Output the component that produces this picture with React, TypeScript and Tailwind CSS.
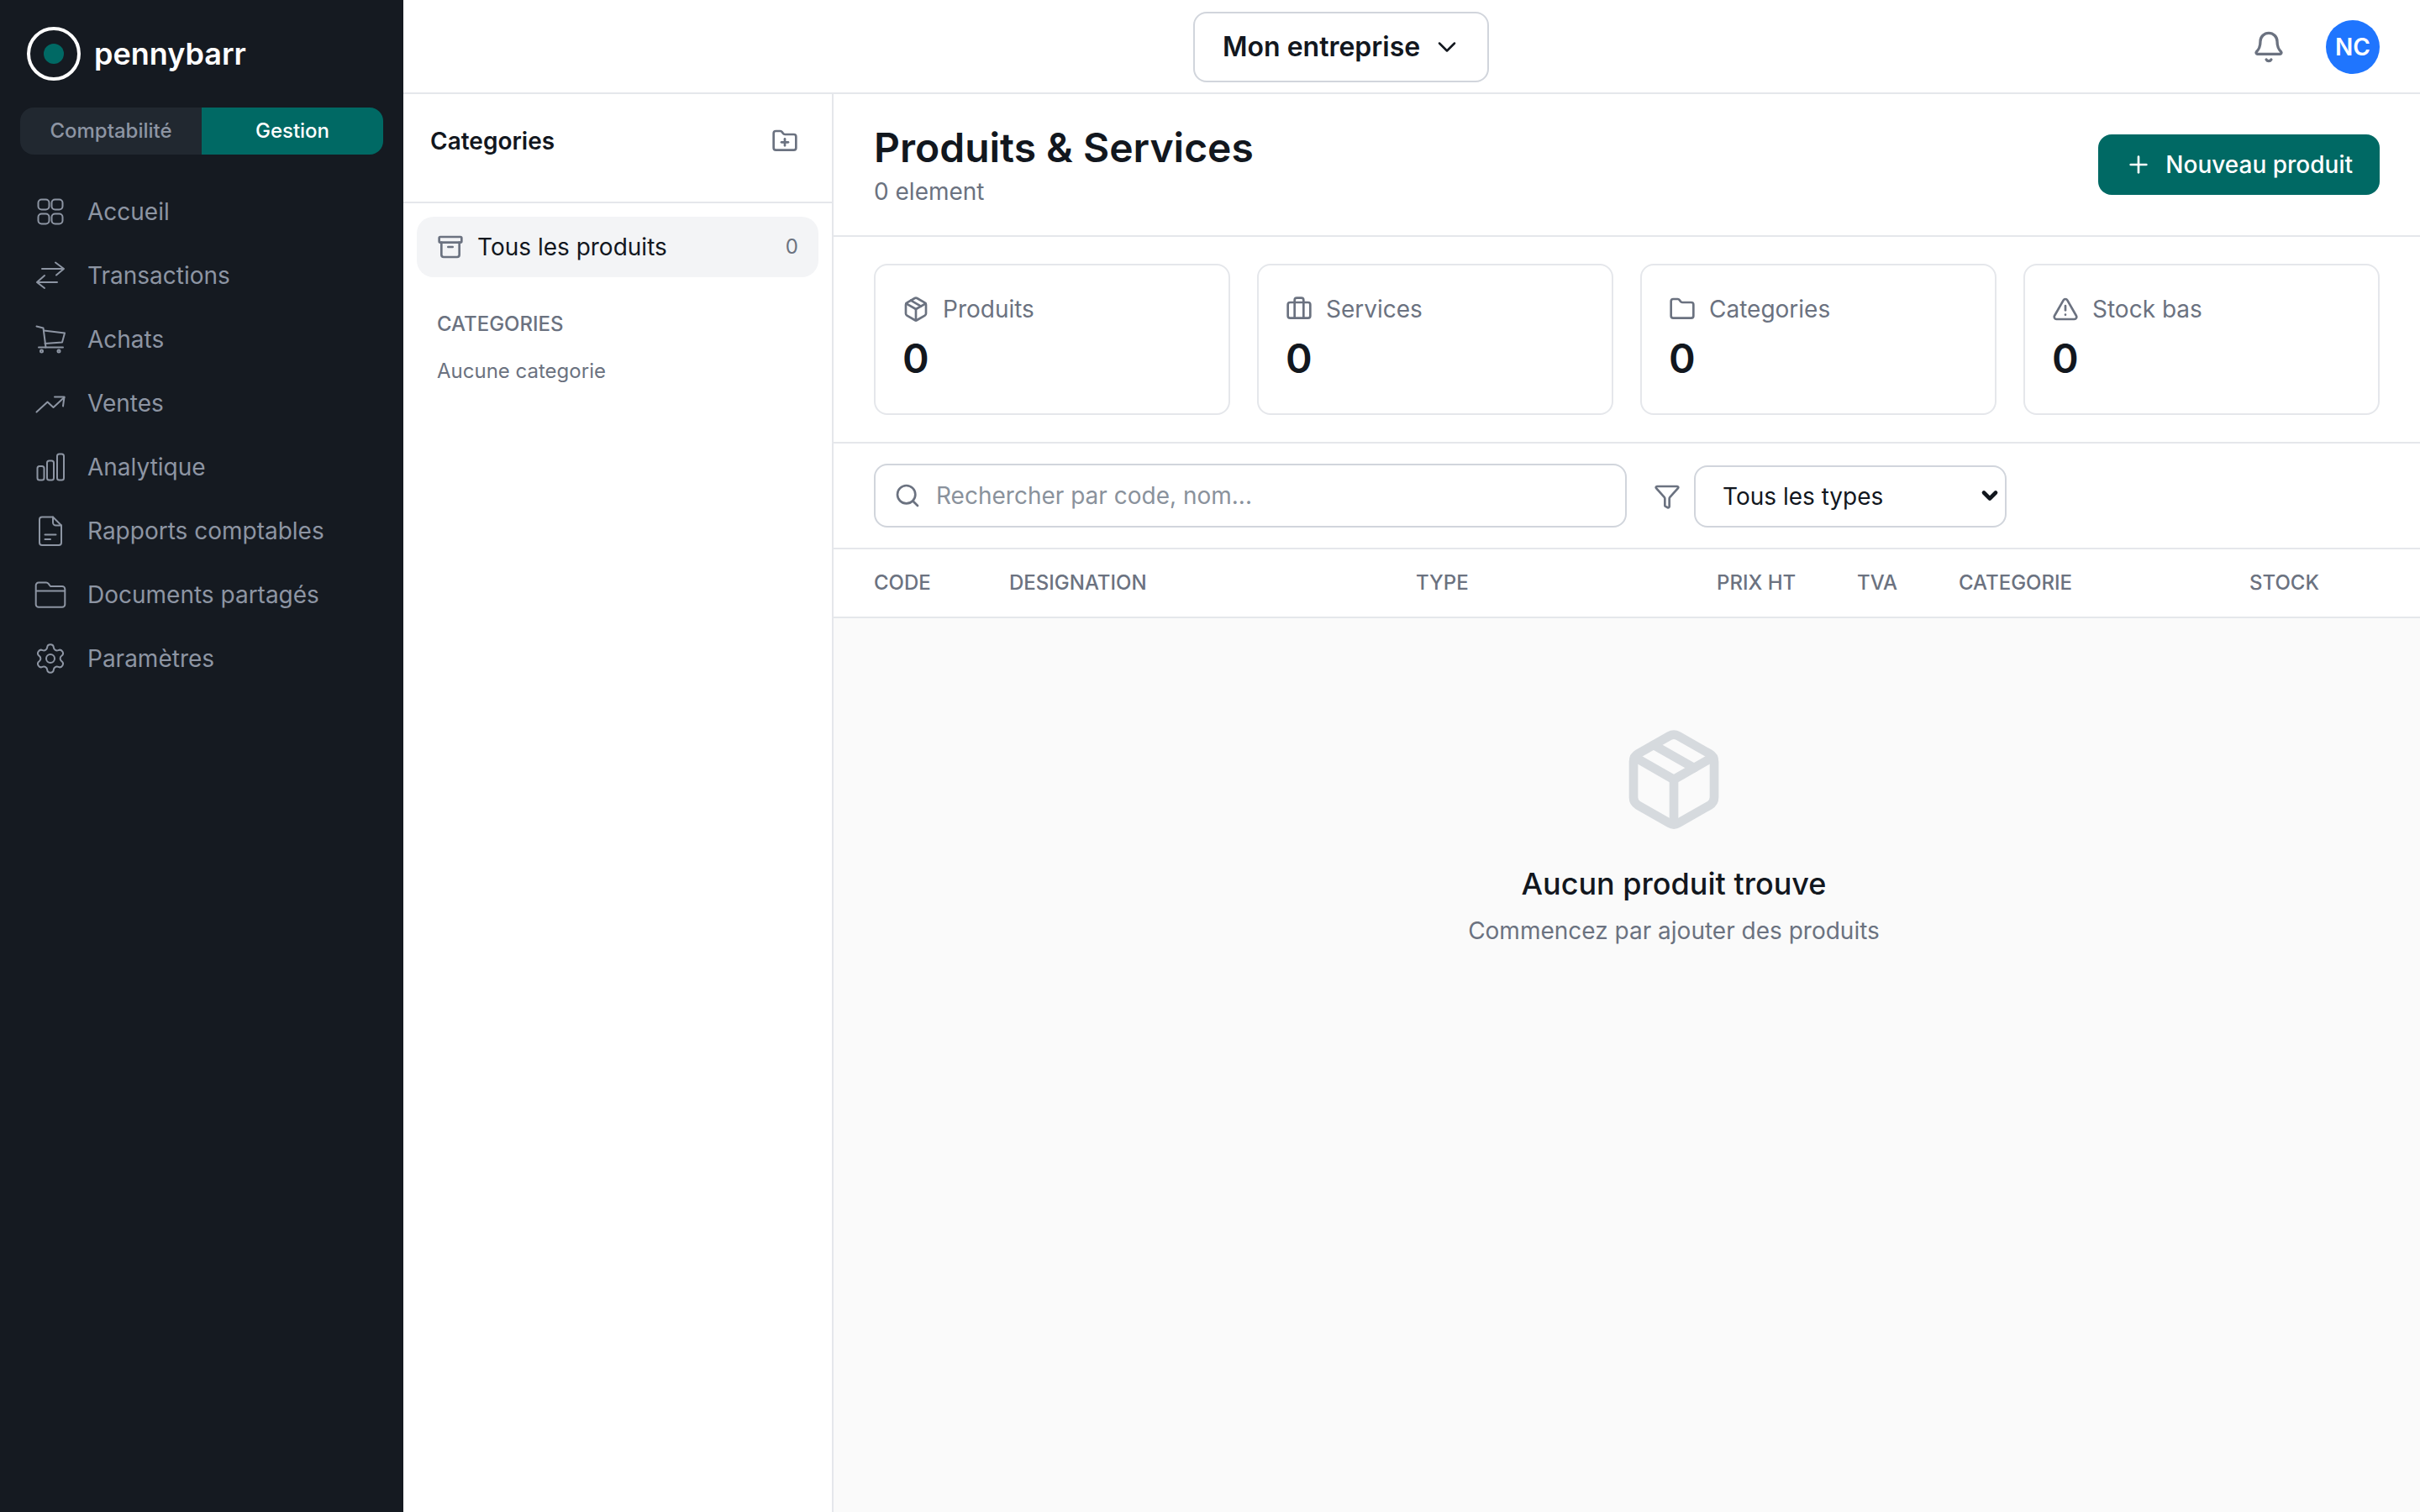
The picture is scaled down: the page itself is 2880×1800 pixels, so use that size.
import { Archive, Bell, Briefcase, ChevronDown, Filter, Folder, FolderPlus, Package, Plus, Search, Settings, TriangleAlert } from "lucide-react";
import type { ReactNode } from "react";

function NavSvg({ children }: { children: ReactNode }) {
  return (
    <svg viewBox="0 0 40 40" fill="none" stroke="currentColor" strokeWidth={2} strokeLinecap="round" strokeLinejoin="round" className="h-10 w-10 shrink-0">
      {children}
    </svg>
  );
}

const navItems: { label: string; icon: ReactNode }[] = [
  {
    label: "Accueil",
    icon: (
      <NavSvg>
        <rect x="5.5" y="5.5" width="13" height="12" rx="4" />
        <rect x="21.5" y="5.5" width="13" height="12" rx="4" />
        <rect x="5.5" y="22.5" width="13" height="12" rx="4" />
        <rect x="21.5" y="22.5" width="13" height="12" rx="4" />
      </NavSvg>
    ),
  },
  {
    label: "Transactions",
    icon: (
      <NavSvg>
        <path d="M10 12h26M26 4.500 36 12l-9 7.500" />
        <path d="M28 28H4M13 20l-9 8 9 7" />
      </NavSvg>
    ),
  },
  {
    label: "Achats",
    icon: (
      <NavSvg>
        <path d="M3.500 4.500 11.500 6.500 14.500 29.500" />
        <path d="M12 9.500 37 12.500 34 23.500 13.500 25" />
        <path d="M6 29.500H35" />
        <circle cx="9.500" cy="34" r="1.500" />
        <circle cx="30" cy="34" r="1.500" />
      </NavSvg>
    ),
  },
  {
    label: "Ventes",
    icon: (
      <NavSvg>
        <path d="M3.500 30.500 16.500 18.500 23.500 25 36.500 13" />
        <path d="M25 12.500H36.500L35 23.500" />
      </NavSvg>
    ),
  },
  {
    label: "Analytique",
    icon: (
      <NavSvg>
        <rect x="4.500" y="19" width="8" height="16.500" rx="2.500" />
        <rect x="16" y="12.500" width="8" height="23" rx="2.500" />
        <rect x="28" y="4.500" width="8" height="31" rx="2.500" />
      </NavSvg>
    ),
  },
  {
    label: "Rapports comptables",
    icon: (
      <NavSvg>
        <path d="M10 3.500h13L33 13.500V34a3 3 0 0 1-3 3H10a3 3 0 0 1-3-3V6.500a3 3 0 0 1 3-3z" />
        <path d="M23 3.500V10a3.500 3.500 0 0 0 3.500 3.500H33" />
        <path d="M13.500 24.500H26.500M13.500 30H20" />
      </NavSvg>
    ),
  },
  {
    label: "Documents partagés",
    icon: (
      <NavSvg>
        <path d="M6 5.500h9c1 0 1.800.4 2.500 1.200l2.500 3.300h14a3.300 3.300 0 0 1 3.300 3.300V31.500a3.300 3.300 0 0 1-3.300 3.300H6a3.300 3.300 0 0 1-3.300-3.300V8.800A3.300 3.300 0 0 1 6 5.500z" />
        <path d="M3 15.500H37" />
      </NavSvg>
    ),
  },
  {
    label: "Paramètres",
    icon: <Settings className="h-10 w-10 shrink-0" strokeWidth={1.2} />,
  },
];

const stats = [
  { label: "Produits", Icon: Package },
  { label: "Services", Icon: Briefcase },
  { label: "Categories", Icon: Folder },
  { label: "Stock bas", Icon: TriangleAlert },
];

const columns = ["CODE", "DESIGNATION", "TYPE", "PRIX HT", "TVA", "CATEGORIE", "STOCK"];

function Sidebar() {
  return (
    <aside className="flex h-full w-[480px] shrink-0 flex-col bg-[#151a21]">
      <div className="flex items-center gap-4 pl-8 pt-8">
        <span className="flex h-16 w-16 items-center justify-center rounded-full border-4 border-white">
          <span className="h-6 w-6 rounded-full bg-[#006964]" />
        </span>
        <span className="text-[36px] leading-[56px] font-semibold text-white">pennybarr</span>
      </div>

      <div className="mx-6 mt-8 flex h-14 overflow-hidden rounded-2xl text-[24px] font-medium">
        <div className="flex w-1/2 items-center justify-center bg-[#212830] text-[#8d95a3]">Comptabilité</div>
        <div className="flex w-1/2 items-center justify-center bg-[#006964] text-white">Gestion</div>
      </div>

      <nav className="mt-[30px] flex flex-col px-10">
        {navItems.map(({ label, icon }) => (
          <div key={label} className="flex h-[76px] items-center gap-6 text-[28px] text-[#8d95a3]">
            {icon}
            {label}
          </div>
        ))}
      </nav>
    </aside>
  );
}

function TopBar() {
  return (
    <header className="flex h-[112px] shrink-0 items-center justify-between border-b-2 border-gray-200 bg-white pr-12 pt-[2px]">
      <div className="ml-[940px] flex h-[84px] w-[352px] items-center gap-[14px] rounded-2xl border-2 border-gray-300 pl-[33px] text-[32px] font-semibold text-[#12171e]">
        Mon entreprise
        <ChevronDown className="h-9 w-9" strokeWidth={1.7} />
      </div>
      <div className="flex items-center gap-12">
        <Bell className="h-10 w-10 text-[#6b7280]" />
        <span className="flex h-16 w-16 items-center justify-center rounded-full bg-[#1f75fe] text-[28px] font-semibold text-white">NC</span>
      </div>
    </header>
  );
}

function CategoriesPanel() {
  return (
    <div className="flex h-full w-[512px] shrink-0 flex-col border-r-2 border-gray-200 bg-white">
      <div className="flex h-[130px] shrink-0 items-center justify-between border-b-2 border-gray-200 pb-4 pl-8 pr-10">
        <span className="text-[28px] font-semibold text-[#12171e]">Categories</span>
        <FolderPlus className="h-8 w-8 text-[#6b7280]" />
      </div>
      <div className="p-4">
        <div className="flex h-[72px] items-center justify-between rounded-[20px] bg-[#f3f4f6] px-6">
          <div className="flex items-center gap-4 text-[28px] text-[#12171e]">
            <Archive className="h-8 w-8 text-[#6b7280]" />
            Tous les produits
          </div>
          <span className="text-[24px] text-[#6b7280]">0</span>
        </div>
        <div className="mt-10 px-6 text-[24px] leading-8 font-medium text-[#6b7280]">CATEGORIES</div>
        <div className="mt-6 px-6 text-[24px] leading-8 text-[#6b7280]">Aucune categorie</div>
      </div>
    </div>
  );
}

function ProductsView() {
  return (
    <div className="flex h-full min-w-0 flex-1 flex-col overflow-hidden bg-white">
      <div className="flex shrink-0 items-center justify-between border-b-2 border-gray-200 px-12 py-8">
        <div>
          <h1 className="text-[48px] leading-[64px] font-semibold text-[#12171e]">Produits &amp; Services</h1>
          <p className="text-[28px] leading-10 text-[#6b7280]">0 element</p>
        </div>
        <button className="flex h-[72px] items-center gap-4 rounded-2xl bg-[#006964] px-8 text-[28px] font-medium text-white">
          <Plus className="h-8 w-8" />
          Nouveau produit
        </button>
      </div>

      <div className="grid shrink-0 grid-cols-4 gap-8 border-b-2 border-gray-200 px-12 py-8">
        {stats.map(({ label, Icon }) => (
          <div key={label} className="h-[180px] rounded-2xl border-2 border-gray-200 p-8">
            <div className="flex items-center gap-4 text-[28px] leading-10 text-[#6b7280]">
              <Icon className="h-8 w-8" />
              {label}
            </div>
            <div className="mt-[7px] text-[48px] leading-[64px] font-semibold text-[#12171e]">0</div>
          </div>
        ))}
      </div>

      <div className="flex shrink-0 items-end gap-8 border-b-2 border-gray-200 px-12 py-6">
        <div className="relative w-[896px]">
          <Search className="absolute left-6 top-[22px] h-8 w-8 text-[#6b7280]" />
          <input
            placeholder="Rechercher par code, nom..."
            className="h-[76px] w-full rounded-2xl border-2 border-gray-300 pl-[72px] text-[28px] outline-none placeholder:text-[#8a929c]"
          />
        </div>
        <div className="flex items-center gap-4">
          <Filter className="h-8 w-8 text-[#6b7280]" />
          <div className="relative">
            <select className="h-[74px] w-[372px] appearance-none rounded-2xl border-2 border-gray-300 bg-white pl-8 text-[28px] text-[#12171e] outline-none">
              <option>Tous les types</option>
            </select>
            <ChevronDown className="pointer-events-none absolute right-[6px] top-[22px] h-7 w-7 text-[#12171e]" strokeWidth={4} />
          </div>
        </div>
      </div>

      <div className="flex min-h-0 flex-1 flex-col overflow-hidden">
        <div className="flex min-h-0 w-[2000px] flex-1 flex-col">
          <div className="grid shrink-0 grid-cols-[161px_484px_358px_167px_121px_346px_1fr] border-b-2 border-gray-200 py-6 pl-12 text-[24px] leading-8 font-medium text-[#6b7280]">
            {columns.map((c) => (
              <span key={c}>{c}</span>
            ))}
          </div>
          <div className="flex flex-1 flex-col items-center bg-[#fafafa] pt-32">
            <Package className="h-32 w-32 text-[#d6dade]" />
            <h2 className="mt-8 text-[36px] leading-[56px] font-medium text-[#12171e]">Aucun produit trouve</h2>
            <p className="mt-2 text-[28px] leading-10 text-[#6b7280]">Commencez par ajouter des produits</p>
          </div>
        </div>
      </div>
    </div>
  );
}

export default function App() {
  return (
    <div className="flex h-screen w-full overflow-hidden bg-white font-[Inter,sans-serif]">
      <Sidebar />
      <div className="flex h-full min-w-0 flex-1 flex-col">
        <TopBar />
        <div className="flex min-h-0 flex-1">
          <CategoriesPanel />
          <ProductsView />
        </div>
      </div>
    </div>
  );
}
